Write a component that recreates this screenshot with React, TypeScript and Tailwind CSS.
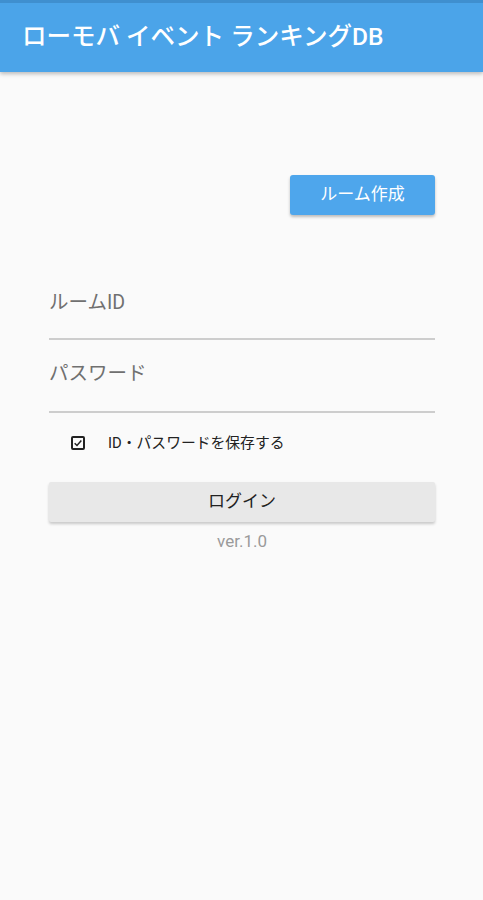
import React, { useState } from 'react';

const font = { fontFamily: 'Roboto, "Noto Sans CJK JP", sans-serif' };

const App: React.FC = () => {
  const [save, setSave] = useState(true);

  return (
    <div className="min-h-[900px] w-full bg-[#fafafa] flex flex-col" style={font}>
      {/* App bar */}
      <header className="h-[72px] bg-[#4ba4e9] border-t-[3px] border-[#3f8fcf] shadow-[0_2px_4px_rgba(0,0,0,0.25)] flex items-center px-[22px]">
        <h1 className="text-white text-[24.5px] font-medium leading-none">ローモバ イベント ランキングDB</h1>
      </header>

      <main className="flex flex-col pl-[49px] pr-[48px] pt-[103px]">
        <div className="flex justify-end">
          <button className="w-[145px] h-[40px] rounded-[3px] bg-[#4ea6ec] text-white text-[17px] shadow-[0_2px_3px_rgba(0,0,0,0.25)]">
            ルーム作成
          </button>
        </div>

        <div className="mt-[73px] flex flex-col">
          <div className="h-[52px] flex items-start pt-[3px] border-b-2 border-[#cdcdcd]">
            <span className="text-[19.5px] text-[#707070] leading-[24px]">ルームID</span>
          </div>
          <div className="h-[73px] flex items-start pt-[22px] border-b-2 border-[#cdcdcd]">
            <span className="text-[19.5px] text-[#707070] leading-[24px]">パスワード</span>
          </div>
        </div>

        <label className="mt-[20px] h-[20px] flex items-center cursor-pointer">
          <span
            onClick={() => setSave(!save)}
            className="ml-[22px] w-[14px] h-[14px] border-2 border-[#222] rounded-[2px] flex items-center justify-center"
          >
            {save && (
              <svg viewBox="0 0 12 12" className="w-[10px] h-[10px]">
                <path d="M2 6.2 L4.8 9 L10 3" fill="none" stroke="#222" strokeWidth="1.8" />
              </svg>
            )}
          </span>
          <span className="ml-[23px] text-[14.8px] text-[#222]">ID・パスワードを保存する</span>
        </label>

        <button className="mt-[29px] h-[40px] w-full bg-[#e8e8e8] rounded-[2px] text-[17px] text-[#222] shadow-[0_2px_3px_rgba(0,0,0,0.2)]">
          ログイン
        </button>

        <p className="mt-[7px] text-center text-[17px] text-[#9a9a9a]">ver.1.0</p>
      </main>
    </div>
  );
};

export default App;
